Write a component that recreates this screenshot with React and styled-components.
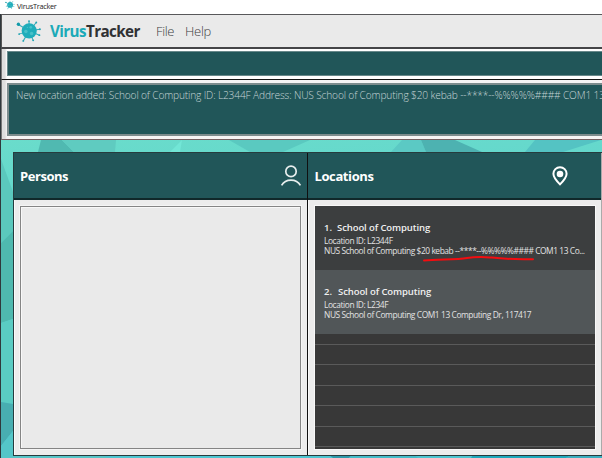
import React from "react";
import styled, { createGlobalStyle } from "styled-components";

const Global = createGlobalStyle`
  * { box-sizing: border-box; }
  body { margin: 0; overflow: hidden; }
`;

const Window = styled.div`
  width: 602px;
  height: 458px;
  overflow: hidden;
  display: flex;
  flex-direction: column;
  background: #fff;
  font-family: "Open Sans", "Noto Sans", sans-serif;
  white-space: nowrap;
`;

const TitleBar = styled.header`
  height: 14px;
  flex: none;
  display: flex;
  align-items: flex-start;
  padding-left: 5px;
  gap: 2px;
  color: #222;
`;

const Text = styled.span`
  display: block;
  font-size: ${(p) => p.$size}px;
  font-weight: ${(p) => p.$weight || 400};
  letter-spacing: ${(p) => p.$spacing || 0}px;
  line-height: ${(p) => p.$line}px;
  white-space: pre;
`;

const Client = styled.div`
  flex: 1;
  min-height: 0;
  display: flex;
  flex-direction: column;
  border-left: 1px solid #30383c;
`;

const MenuBar = styled.nav`
  height: 35px;
  flex: none;
  display: flex;
  align-items: center;
  padding-left: 14px;
  background: #eaeaea;
  border-top: 1px solid #58585a;
  border-left: 1px solid #555;
  border-bottom: 2px solid #454548;
`;

const Brand = styled.div`
  display: flex;
  width: 91px;
  margin-left: 8px;
  margin-right: 15px;
  color: #303133;
  em { font-style: normal; color: #1caab8; }
`;

const MenuItem = styled.div`
  width: 29px;
  color: #3c3d3f;
`;

const CommandStrip = styled.div`
  height: 30px;
  flex: none;
  padding: 2px 0 3px 5px;
  background: linear-gradient(90deg, #dedede 0 3px, #fff 5px);
  border-left: 1px solid #777;
`;

const CommandBox = styled.div`
  height: 25px;
  background: #215659;
  border: 1px solid #67888a;
  border-right: 0;
`;

const ResultStrip = styled.div`
  height: 61px;
  flex: none;
  padding: 3px 0 3px 5px;
  background: linear-gradient(90deg, #dedede 0 3px, #f6f4f4 5px);
  border-top: 1px solid #161616;
  border-bottom: 1px solid #755f60;
  border-left: 1px solid #777;
`;

const ResultBox = styled.div`
  height: 53px;
  overflow: hidden;
  padding: 3px 0 0 7px;
  color: #c6d5d6;
  background: #215659;
  border: 2px solid #7d8c8d;
  border-right: 0;
`;

const Content = styled.main`
  position: relative;
  flex: 1;
  min-height: 0;
  padding: 12px 0 3px 12px;
`;

const Backdrop = styled.svg`
  position: absolute;
  top: 0;
  left: 0;
`;

const Panels = styled.div`
  position: relative;
  display: grid;
  grid-template-columns: 294px 294px;
  height: 304px;
  border: 1px solid #263c3e;
  border-right: 0;
  background: #ececec;
`;

const Panel = styled.section`
  display: flex;
  flex-direction: column;
  min-width: 0;
  border-right: 1px solid ${(p) => (p.$last ? "#aaa" : "#101010")};
`;

const PanelHeader = styled.div`
  height: 47px;
  flex: none;
  display: flex;
  align-items: center;
  justify-content: space-between;
  padding: 1px ${(p) => p.$end}px 0 ${(p) => p.$start}px;
  color: #fff;
  background: #215659;
  border-bottom: 2px solid #10282a;
`;

const PanelBody = styled.div`
  flex: 1;
  min-height: 0;
  padding: 6px 6px 6px ${(p) => p.$start}px;
  border-left: 1px solid #fafafa;
`;

const EmptyList = styled.div`
  height: 243px;
  background: #eaeaea;
  border: 1px solid #858585;
  box-shadow: 0 0 0 1px #f5f5f5, inset 1px 1px #f8f8f8;
`;

const LocationList = styled.div`
  height: 243px;
  overflow: hidden;
  background: #383838;
  box-shadow: 0 0 0 1px #f8f8f8;
`;

const Card = styled.article`
  position: relative;
  height: 64px;
  display: flex;
  flex-direction: column;
  padding: 14px 0 0 9px;
  color: #e3e3e3;
  background: ${(p) => (p.$alt ? "#515658" : "#3c3e3f")};
`;

const CardTitle = styled.div`
  display: flex;
  gap: ${(p) => p.$gap}px;
  height: 15px;
  color: #f0f0f0;
`;

const BlankRow = styled.div`
  height: ${(p) => p.$height}px;
  border-bottom: 1px solid #5a5a5a;
`;

const RedMark = styled.svg`
  position: absolute;
  left: 107px;
  top: 46px;
`;

const arms = [
  [12.5, 3], [19.5, 4.3], [23, 10.8], [22.5, 16.5], [16.5, 21.5], [7, 22], [3, 15.5], [2.6, 6.5],
];

function VirusIcon({ size }) {
  return (
    <svg width={size} height={size} viewBox="0 0 25 25">
      <g stroke="#30a9b6" strokeWidth="1" fill="#20a3b2">
        {arms.map(([x, y]) => (
          <g key={`${x}-${y}`}>
            <path d={`M12.7 12.3L${x} ${y}`} />
            <circle cx={x} cy={y} r="0.9" stroke="none" />
          </g>
        ))}
      </g>
      <circle cx="2.3" cy="6" r="1.6" fill="#129aa9" />
      <circle cx="12.7" cy="12.3" r="7.3" fill="#1fadba" />
      <g fill="#48c0c8">
        <circle cx="9.5" cy="13" r="1.7" />
        <circle cx="14.2" cy="9" r="1.3" />
        <circle cx="15" cy="15" r="1.7" />
        <circle cx="11" cy="9" r=".7" />
      </g>
    </svg>
  );
}

function PersonIcon() {
  return (
    <svg width="22" height="22" viewBox="0 0 22 22" fill="none" stroke="#e8eeee" strokeWidth="1.7">
      <circle cx="11" cy="6.4" r="5.2" />
      <path d="M1.6 20.4C5.5 13.3 16.5 13.3 20.4 20.4" />
    </svg>
  );
}

function PinIcon() {
  return (
    <svg width="16" height="20" viewBox="0 0 16 20">
      <path d="M8 1.2A6.6 6.6 0 0 0 1.4 7.8C1.4 11.6 4.8 15.2 8 18.4C11.2 15.2 14.6 11.6 14.6 7.8A6.6 6.6 0 0 0 8 1.2Z" fill="none" stroke="#fff" strokeWidth="2" />
      <circle cx="8" cy="8" r="3.3" fill="#fff" />
    </svg>
  );
}

function PolygonBackdrop() {
  return (
    <Backdrop width="601" height="318" viewBox="1 140 601 318">
      <defs>
        <linearGradient id="sea" x1="0" y1="0" x2="0.15" y2="1">
          <stop offset="0" stopColor="#6adccb" />
          <stop offset="1" stopColor="#4cc6d2" />
        </linearGradient>
      </defs>
      <rect x="1" y="140" width="601" height="318" fill="url(#sea)" />
      <path d="M41 140H62L74 152H38Z" fill="#50b9b1" />
      <path d="M62 140H116L115 152H74Z" fill="#5fcbc0" />
      <path d="M182 140L180 152L170 152Z" fill="#72e6d6" />
      <path d="M229 140H310L283 152H250Z" fill="#5ac9c0" />
      <path d="M402 140H421L426 152H391Z" fill="#5bc9c4" />
      <path d="M421 140H455L482 152H426Z" fill="#4db2b1" />
      <path d="M535 140H601L563 152H525Z" fill="#54c3c3" />
      <path d="M1 159L13 192V231L1 243Z" fill="#5bc8bd" />
      <path d="M1 243L13 231V319L1 323Z" fill="#4fb9af" />
      <path d="M1 323L13 319V404L1 402Z" fill="#5accc3" />
      <path d="M1 402L13 404V431L1 446Z" fill="#48aeb1" />
      <path d="M1 446L13 431V458H1Z" fill="#54c6c8" />
      <path d="M13 455H100L110 458H13Z" fill="#55c5c8" />
      <path d="M329 455H352L349 458H333Z" fill="#2c99aa" />
      <path d="M352 455H414L418 458H349Z" fill="#43bdca" />
      <path d="M473 455H571L566 458H471Z" fill="#1ea9bd" />
      <path d="M571 455H602V458H566Z" fill="#3aafc0" />
    </Backdrop>
  );
}

const locations = [
  {
    name: "School of Computing",
    id: "L2344F",
    address: "NUS School of Computing $20 kebab --****--%%%%%#### COM1 13 Co...",
    spacing: -0.42,
    marked: true,
  },
  {
    name: "School of Computing",
    id: "L234F",
    address: "NUS School of Computing COM1 13 Computing Dr, 117417",
    spacing: -0.41,
  },
];

export default function App() {
  return (
    <Window>
      <Global />
      <TitleBar>
        <VirusIcon size={10} />
        <Text $size={7.3} $line={12} $spacing={-0.25}>VirusTracker</Text>
      </TitleBar>
      <Client>
        <MenuBar>
          <VirusIcon size={26} />
          <Brand>
            <Text $size={15.2} $line={30} $weight={700} $spacing={-0.6}><em>Virus</em>Tracker</Text>
          </Brand>
          <MenuItem><Text $size={13} $line={29} $weight={300} $spacing={-0.4}>File</Text></MenuItem>
          <MenuItem><Text $size={13} $line={29} $weight={300} $spacing={-0.3}>Help</Text></MenuItem>
        </MenuBar>
        <CommandStrip><CommandBox /></CommandStrip>
        <ResultStrip>
          <ResultBox>
            <Text $size={10.2} $line={15} $weight={300} $spacing={-0.16}>
              {"New location added: School of Computing ID: L2344F Address: NUS School of Computing $20 kebab --****--%%%%%#### COM1 13"}
            </Text>
          </ResultBox>
        </ResultStrip>
        <Content>
          <PolygonBackdrop />
          <Panels>
            <Panel>
              <PanelHeader $start={6} $end={5}>
                <Text $size={13} $line={20} $weight={700} $spacing={-0.45}>Persons</Text>
                <PersonIcon />
              </PanelHeader>
              <PanelBody $start={5}><EmptyList /></PanelBody>
            </Panel>
            <Panel $last>
              <PanelHeader $start={6.5} $end={33}>
                <Text $size={13} $line={20} $weight={700} $spacing={-0.4}>Locations</Text>
                <PinIcon />
              </PanelHeader>
              <PanelBody $start={6}>
                <LocationList>
                  {locations.map((place, i) => (
                    <Card key={place.id} $alt={i % 2 === 1}>
                      <CardTitle $gap={i ? 6 : 5}>
                        <Text $size={9.5} $line={15} $weight={600}>{`${i + 1}.`}</Text>
                        <Text $size={9.5} $line={15} $weight={600} $spacing={-0.1}>{place.name}</Text>
                      </CardTitle>
                      <Text $size={8.4} $line={11} $spacing={-0.4}>{`Location ID: ${place.id}`}</Text>
                      <Text $size={8.4} $line={10} $spacing={place.spacing}>{place.address}</Text>
                      {place.marked && (
                        <RedMark width="114" height="12" viewBox="0 0 114 12">
                          <path d="M2 8.5C16 7 34 8 45 6C55 4.5 61 5 70 5.5C85 7.5 96 7 111 7.2" fill="none" stroke="#f20d10" strokeWidth="2" strokeLinecap="round" />
                        </RedMark>
                      )}
                    </Card>
                  ))}
                  <BlankRow $height={11} />
                  <BlankRow $height={20} />
                  <BlankRow $height={21} />
                  <BlankRow $height={20} />
                  <BlankRow $height={21} />
                  <BlankRow $height={20} />
                </LocationList>
              </PanelBody>
            </Panel>
          </Panels>
        </Content>
      </Client>
    </Window>
  );
}
